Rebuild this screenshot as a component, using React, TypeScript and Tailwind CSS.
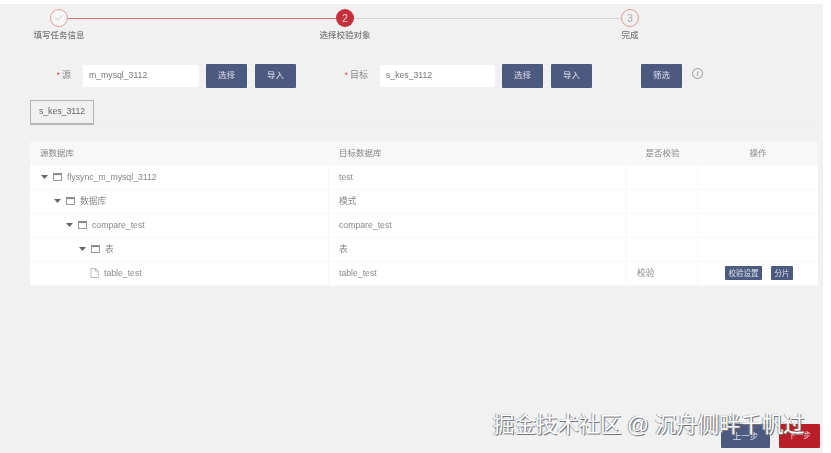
import { Check } from "lucide-react";

const font = "font-['Liberation_Sans','Noto_Sans_CJK_SC',sans-serif]";

const rows = [
  { indent: "pl-[11px]", name: "flysync_m_mysql_3112", target: "test", folder: true },
  { indent: "pl-[24px]", name: "数据库", target: "模式", folder: true },
  { indent: "pl-[36px]", name: "compare_test", target: "compare_test", folder: true },
  { indent: "pl-[49px]", name: "表", target: "表", folder: true },
  { indent: "pl-[60px]", name: "table_test", target: "table_test", folder: false },
];

function NavyButton({ label }: { label: string }) {
  return (
    <button className="flex h-[24px] w-[41px] items-center justify-center rounded-[1px] bg-[#4c5a80] text-[8.5px] text-[#dfe3ec]">
      {label}
    </button>
  );
}

function Field({ label, value, labelWidth, inputWidth }: { label: string; value: string; labelWidth: string; inputWidth: string }) {
  return (
    <div className="flex items-center">
      <div className={`${labelWidth} flex items-center justify-end gap-[2px] pr-[12px] text-[9px] text-[#888]`}>
        <span className="text-[#d9534f]">*</span>
        <span>{label}</span>
      </div>
      <div className={`${inputWidth} flex h-[22px] items-center rounded-[2px] bg-white pl-[6px] text-[8.7px] text-[#777]`}>
        {value}
      </div>
      <div className="ml-[7px] flex gap-[8px]">
        <NavyButton label="选择" />
        <NavyButton label="导入" />
      </div>
    </div>
  );
}

function Step({ label, children }: { label: string; children: React.ReactNode }) {
  return (
    <div className="flex w-[58px] shrink-0 flex-col items-center">
      {children}
      <span className="mt-[2px] whitespace-nowrap text-[8.5px] font-medium text-[#777]">{label}</span>
    </div>
  );
}

function FolderIcon() {
  return (
    <svg width="9" height="8" viewBox="0 0 9 8" fill="none" className="shrink-0">
      <rect x="0.5" y="0.5" width="8" height="7" stroke="#999" fill="#fff" />
      <rect x="0.5" y="0.5" width="8" height="1.6" fill="#888" />
    </svg>
  );
}

function FileIcon() {
  return (
    <svg width="9" height="10" viewBox="0 0 9 10" fill="none" className="shrink-0">
      <path d="M1 .5h4.5L8.3 3v6.5H1z M5.5 .5V3h2.8" stroke="#aaa" strokeWidth="0.8" fill="#fff" />
    </svg>
  );
}

function Caret() {
  return (
    <svg width="7" height="4" viewBox="0 0 7 4" className="shrink-0">
      <path d="M0 0h7L3.5 4z" fill="#666" />
    </svg>
  );
}

export default function App() {
  return (
    <div className={`${font} relative h-[453px] w-[831px] overflow-hidden bg-white`}>
      <div className="flex h-full flex-col blur-[0.5px]">
        <div className="mt-[4px] flex w-[823px] flex-1 flex-col bg-[#f1f1f1]">
          {/* Steps */}
          <div className="flex items-start pl-[30px] pt-[5px]">
            <Step label="填写任务信息">
              <div className="flex h-[18px] w-[18px] items-center justify-center rounded-full border border-[#d8a0a0] bg-[#f8f8f8]">
                <Check size={10} strokeWidth={1.5} color="#aaa" />
              </div>
            </Step>
            <div className="mt-[9px] mr-[-20px] ml-[-20px] h-px w-[268px] bg-[#d77a7a]" />
            <Step label="选择校验对象">
              <div className="flex h-[18px] w-[18px] items-center justify-center rounded-full bg-[#c6303a] text-[10px] text-[#f3d6d8]">
                2
              </div>
            </Step>
            <div className="mt-[9px] mr-[-20px] ml-[-20px] h-px w-[267px] bg-[#d5d5d5]" />
            <Step label="完成">
              <div className="flex h-[18px] w-[18px] items-center justify-center rounded-full border border-[#d8a0a0] text-[10px] text-[#aaa]">
                3
              </div>
            </Step>
          </div>

          {/* Source / target form */}
          <div className="mt-[22px] flex items-center">
            <Field label="源" value="m_mysql_3112" labelWidth="w-[83px]" inputWidth="w-[116px]" />
            <div className="ml-[47px]">
              <Field label="目标" value="s_kes_3112" labelWidth="w-[37px]" inputWidth="w-[115px]" />
            </div>
            <div className="ml-[49px]">
              <NavyButton label="筛选" />
            </div>
            <div className="relative top-[-2px] ml-[10px] flex h-[11px] w-[11px] items-center justify-center rounded-full border border-[#999] text-[7px] italic text-[#777]">
              i
            </div>
          </div>

          {/* Tab */}
          <div className="mx-[30px] mt-[12px] w-[788px] border-b border-[#eeeeee]">
            <div className="flex h-[25px] w-[64px] items-center justify-center border border-b-2 border-[#b5b5b5] text-[8.7px] text-[#666]">
              s_kes_3112
            </div>
          </div>

          {/* Tree table */}
          <div className="mx-[30px] mt-[16px] w-[788px] text-[8.7px] text-[#888]">
            <div className="grid h-[24px] grid-cols-[299px_298px_71px_120px] items-center bg-[#f8f8f8] text-[8.5px]">
              <span className="pl-[10px]">源数据库</span>
              <span className="pl-[10px]">目标数据库</span>
              <span className="text-center">是否校验</span>
              <span className="text-center">操作</span>
            </div>
            {rows.map((row) => (
              <div
                key={row.name}
                className="grid h-[24px] grid-cols-[299px_298px_71px_120px] items-center border-b border-[#f8f8f8] bg-white"
              >
                <div className={`${row.indent} flex h-full items-center gap-[5px] border-r border-[#f7f7f7]`}>
                  {row.folder ? (
                    <>
                      <Caret />
                      <FolderIcon />
                    </>
                  ) : (
                    <FileIcon />
                  )}
                  <span>{row.name}</span>
                </div>
                <div className="flex h-full items-center border-r border-[#f7f7f7] pl-[10px]">{row.target}</div>
                <div className="flex h-full items-center border-r border-[#f7f7f7] pl-[10px]">
                  {row.folder ? "" : "校验"}
                </div>
                <div className="flex h-full items-center gap-[9px] pl-[27px]">
                  {!row.folder && (
                    <>
                      <button className="h-[14px] w-[37px] rounded-[1px] bg-[#4c5a80] text-[7.5px] text-[#dfe3ec]">
                        校验设置
                      </button>
                      <button className="h-[14px] w-[22px] rounded-[1px] bg-[#4c5a80] text-[7.5px] text-[#dfe3ec]">
                        分片
                      </button>
                    </>
                  )}
                </div>
              </div>
            ))}
          </div>

          {/* Footer buttons */}
          <div className="mt-auto mb-[5px] flex justify-end gap-[9px] pr-[3px]">
            <button className="h-[24px] w-[49px] rounded-[1px] bg-[#4c5a80] text-[8.5px] text-[#dfe3ec]">上一步</button>
            <button className="h-[24px] w-[41px] rounded-[1px] bg-[#b81f2a] text-[7.5px] text-[#f3d6d8]">下一步</button>
          </div>
        </div>
      </div>

      {/* Watermark */}
      <div className="absolute top-[411px] left-[493px] whitespace-nowrap text-[21.4px] leading-[28px] text-white [text-shadow:1px_1px_0_#777,-1px_0_1px_#999]">
        掘金技术社区 @ 沉舟侧畔千帆过
      </div>
    </div>
  );
}
